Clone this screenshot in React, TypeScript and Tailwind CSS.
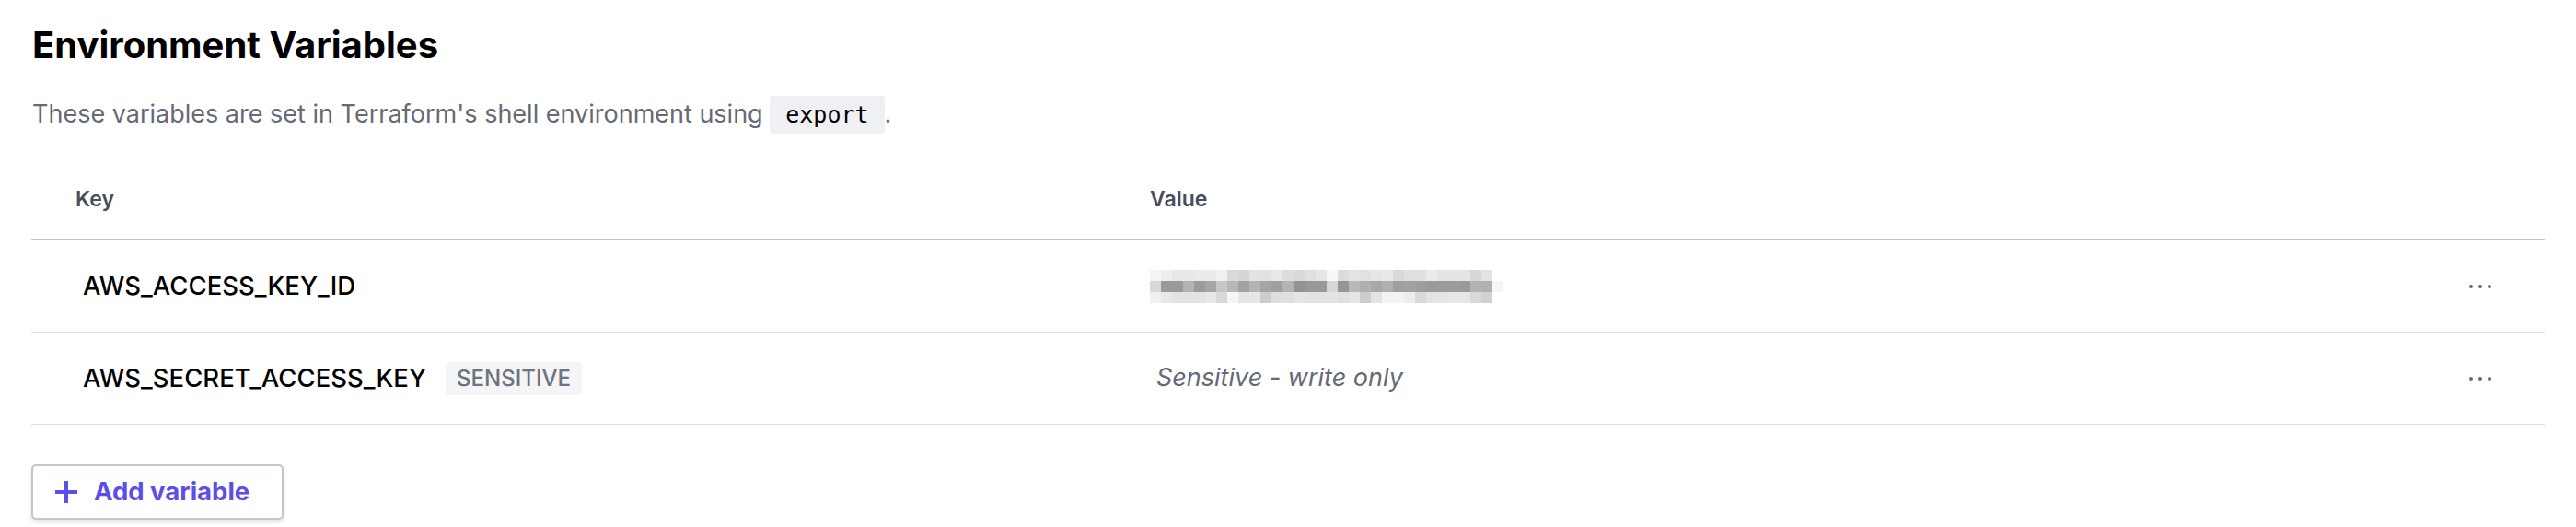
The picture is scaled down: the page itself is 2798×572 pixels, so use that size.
import React from "react";

const variables = [
    { key: "AWS_ACCESS_KEY_ID", sensitive: false },
    { key: "AWS_SECRET_ACCESS_KEY", sensitive: true },
];

// pixelated (redacted) value, three rows of grey blocks
const blurRows = [
    ["f5", "ee", "e8", "e8", "ea", "eb", "f0", "d9", "d6", "e3", "e1", "e9", "dd", "d9", "df", "e6", "f8", "dc", "e3", "e1", "e6", "e9", "d9", "df", "e0", "ea", "e4", "e4", "e4", "d7", "e3"],
    ["d8", "9a", "9a", "b3", "9c", "a6", "c6", "b7", "a2", "b4", "a5", "a0", "b3", "93", "98", "98", "d6", "95", "b8", "b0", "a8", "b0", "a0", "a1", "9e", "9a", "9c", "9c", "9a", "b3", "b0", "f5"],
    ["f0", "e8", "e3", "e3", "e3", "e8", "d9", "f6", "e6", "e6", "cc", "de", "df", "e5", "e2", "e2", "e3", "e0", "e5", "cd", "e3", "f3", "f3", "ed", "da", "e4", "e4", "e7", "e7", "d9", "d0"],
];

function BlurredValue() {
    const w = 12;
    return (
        <svg width="384" height="36" viewBox="0 0 384 36" shapeRendering="crispEdges" className="block">
            {blurRows.map((row, r) =>
                row.map((c, i) => (
                    <rect key={`${r}-${i}`} x={i * w} y={r * 12} width={w} height={12} fill={`#${c}${c}${c}`} />
                ))
            )}
        </svg>
    );
}

function Dots() {
    return (
        <div className="flex items-center gap-[6px]">
            <span className="w-[4px] h-[4px] rounded-full bg-[#656a76]"></span>
            <span className="w-[4px] h-[4px] rounded-full bg-[#656a76]"></span>
            <span className="w-[4px] h-[4px] rounded-full bg-[#656a76]"></span>
        </div>
    );
}

export default function App() {
    return (
        <div className="w-[2798px] h-[572px] bg-white px-[34px] pt-[25px] font-['Inter',sans-serif] overflow-hidden">
            <h2 className="text-[40px] leading-[48px] font-bold text-black pl-[1px]">Environment Variables</h2>
            <p className="mt-[33px] text-[27px] leading-[36px] text-[#656a76] pl-[1px]">
                These variables are set in Terraform's shell environment using{" "}
                <code className="px-[17px] py-[6px] rounded-[3px] bg-[#eef0f3] text-black font-['DejaVu_Sans_Mono',monospace] text-[25px]">
                    export
                </code>
                .
            </p>

            {/* table */}
            <div className="mt-[58px]">
                <div className="grid grid-cols-[1215px_1fr_140px] border-b-2 border-[#bfc3cf] pb-[28px] text-[23px] leading-[30px] font-semibold text-[#474d5a]">
                    <div className="pl-[48px]">Key</div>
                    <div>Value</div>
                    <div></div>
                </div>
                {variables.map((v) => (
                    <div key={v.key} className="grid grid-cols-[1215px_1fr_140px] items-center h-[100px] border-b border-[#dcdfe4]">
                        <div className="pl-[56px] flex items-center gap-[21px]">
                            <span className="text-[27.5px] font-medium text-black">{v.key}</span>
                            {v.sensitive && (
                                <span className="h-[36px] px-[12px] flex items-center rounded-[4px] bg-[#f4f5f7] text-[24px] font-medium text-[#6e7380] uppercase">
                                    Sensitive
                                </span>
                            )}
                        </div>
                        <div>
                            {v.sensitive ? (
                                <span className="pl-[7px] text-[27px] italic text-[#656a76]">Sensitive - write only</span>
                            ) : (
                                <BlurredValue />
                            )}
                        </div>
                        <div className="flex justify-center">
                            <Dots />
                        </div>
                    </div>
                ))}
            </div>

            <button className="mt-[43px] w-[274px] h-[60px] flex items-center gap-[16px] pl-[22px] border-2 border-[#c1c5d0] rounded-[5px] bg-white shadow-[0_3px_4px_rgba(101,106,118,0.18)]">
                <svg width="28" height="28" viewBox="0 0 28 28" fill="none">
                    <path d="M14 2v24M2 14h24" stroke="#5b4fe6" strokeWidth="4" />
                </svg>
                <span className="text-[27.5px] font-bold text-[#5b4fe6]">Add variable</span>
            </button>
        </div>
    );
}
